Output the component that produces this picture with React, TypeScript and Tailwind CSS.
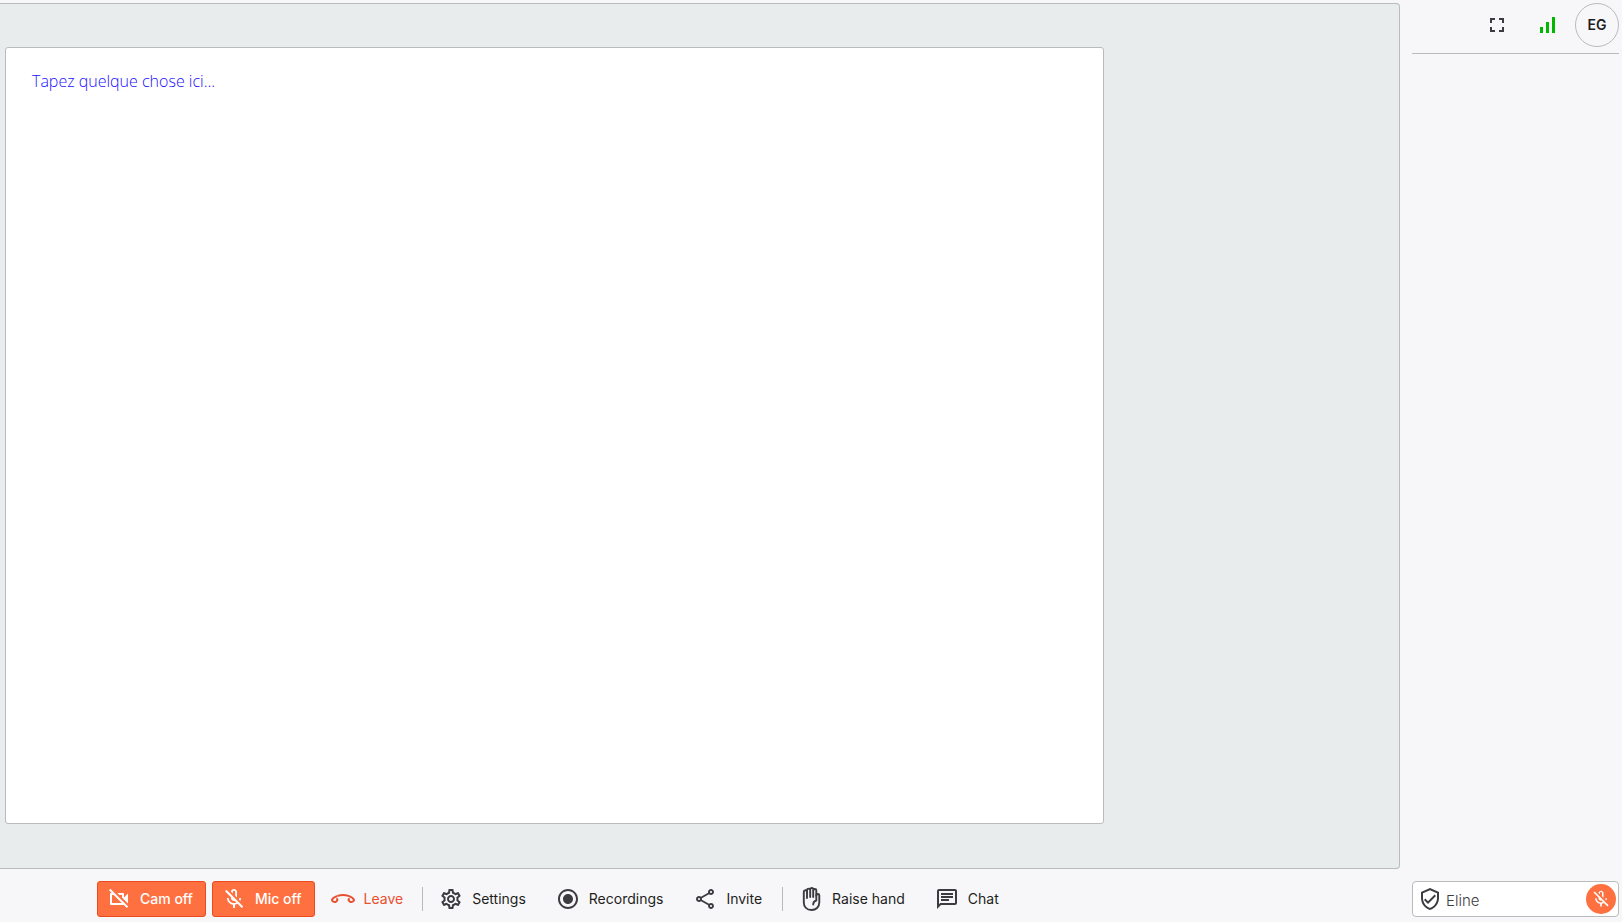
import type { ReactNode } from "react";
import {
  MdFullscreen,
  MdOutlineChat,
  MdOutlineMicOff,
  MdOutlineSettings,
  MdOutlineShare,
  MdOutlineVerifiedUser,
  MdOutlineVideocamOff,
  MdRadioButtonChecked,
} from "react-icons/md";

function HangUpIcon() {
  return (
    <svg viewBox="0 0 24 24" className="size-6" fill="none" stroke="currentColor" strokeWidth="2" strokeLinejoin="round">
      <path d="M6.500 8.900C10 7.700 14 7.700 17.500 8.900C20.200 9.800 22.400 11.200 23 12.800C23.200 14.400 20.600 15.600 18.900 14.600C17.300 13.700 17 12.200 18.600 11.300" />
      <path d="M6.500 8.900C3.800 9.800 1.600 11.200 1 12.800C.8 14.400 3.400 15.600 5.100 14.600C6.700 13.700 7 12.200 5.400 11.300" />
    </svg>
  );
}

function HandIcon() {
  return (
    <svg
      viewBox="0 0 24 24"
      className="size-6 text-[#3c3c40]"
      fill="none"
      stroke="currentColor"
      strokeWidth="1.9"
      strokeLinecap="round"
      strokeLinejoin="round"
    >
      <path d="M8 11V4.500C8 2.800 4.800 2.800 4.800 5V15.500C4.800 20 7.800 23 12.500 23C17 23 20.300 20 20.300 15.500V8.500C20.300 6.500 17.300 6.500 17.300 8.500" />
      <path d="M8 4.500V3C8 1.200 11.200 1.200 11.200 3V10M11.200 3V2C11.200 .6 14.200 .6 14.200 2V10M14.200 3C14.200 1.500 17.300 1.500 17.300 3.200V13.500C15.300 14 14.200 15.500 14.200 17.500" />
    </svg>
  );
}

function Separator() {
  return <div className="h-6 w-px bg-[#b9b9bb]" />;
}

type ToolButtonProps = { icon: ReactNode; label: string; className?: string };

function ToolButton({ icon, label, className = "border-transparent pr-[13px] text-[#1e1e20]" }: ToolButtonProps) {
  return (
    <button type="button" className={`flex h-9 items-center gap-[9px] rounded-[3px] border pl-[9px] text-sm ${className}`}>
      {icon}
      {label}
    </button>
  );
}

export default function App() {
  return (
    <div className="flex h-screen bg-[#f7f7fa] font-['Inter',sans-serif] text-[#1e1e20]">
      <main className="flex min-w-0 flex-1 flex-col pt-[3px]">
        {/* Whiteboard */}
        <section className="min-h-0 flex-1 rounded-r border-y border-r border-[#b9bbbd] bg-[#e8eced] pt-[43px] pb-11 pl-[5px]">
          <div className="aspect-[1099/777] h-full rounded-[3px] border border-[#b9bbbd] bg-white">
            <textarea
              aria-label="Note"
              placeholder="Tapez quelque chose ici..."
              className="block size-full resize-none px-[26px] py-[21px] font-['Open_Sans',sans-serif] text-base font-[350] outline-none placeholder:text-[#1a0fff]"
            />
          </div>
        </section>

        {/* Toolbar */}
        <div className="flex items-center gap-1.5 pt-3 pb-[5px] pl-[97px]">
          <ToolButton
            icon={<MdOutlineVideocamOff className="size-6" />}
            label="Cam off"
            className="border-[#ec4a1c] bg-[#ff7040] pr-3 font-medium text-white"
          />
          <ToolButton
            icon={<MdOutlineMicOff className="size-6" />}
            label="Mic off"
            className="border-[#ec4a1c] bg-[#ff7040] pr-3 font-medium text-white"
          />
          <ToolButton icon={<HangUpIcon />} label="Leave" className="border-transparent pr-3 text-[#e9502f]" />
          <Separator />
          <ToolButton icon={<MdOutlineSettings className="size-6 text-[#3c3c40]" />} label="Settings" />
          <ToolButton icon={<MdRadioButtonChecked className="size-6 text-[#3c3c40]" />} label="Recordings" />
          <ToolButton icon={<MdOutlineShare className="size-6 text-[#3c3c40]" />} label="Invite" />
          <Separator />
          <ToolButton icon={<HandIcon />} label="Raise hand" />
          <ToolButton icon={<MdOutlineChat className="size-6 text-[#3c3c40]" />} label="Chat" />
        </div>
      </main>

      {/* Sidebar */}
      <aside className="flex w-[222px] shrink-0 flex-col justify-between pt-[3px] pr-[3px] pb-[5px] pl-3">
        <header className="flex items-center justify-end border-b border-[#b9bbbd] pb-1.5">
          <button type="button" aria-label="Full screen" className="mr-[26px]">
            <MdFullscreen className="size-6 text-[#3c3c40]" />
          </button>
          <svg viewBox="0 0 24 24" className="mr-4 size-6 text-[#00b800]" fill="currentColor">
            <path d="M5 14h3v6H5zM11 9h3v11h-3zM17 4h3v16h-3z" />
          </svg>
          <button
            type="button"
            className="flex size-11 items-center justify-center rounded-full border border-[#b9bbbd] text-sm font-semibold"
          >
            EG
          </button>
        </header>

        <div className="flex h-9 items-center gap-1 rounded border border-[#b9bbbd] bg-white pr-0.5 pl-[5px]">
          <MdOutlineVerifiedUser className="size-6 text-[#3c3c40]" />
          <span className="flex-1 pt-1 text-[15px] font-light text-[#3c3c40]">Eline</span>
          <button
            type="button"
            aria-label="Unmute Eline"
            className="flex size-[30px] items-center justify-center rounded-full bg-[#ff7040] text-white"
          >
            <MdOutlineMicOff className="size-5" />
          </button>
        </div>
      </aside>
    </div>
  );
}
